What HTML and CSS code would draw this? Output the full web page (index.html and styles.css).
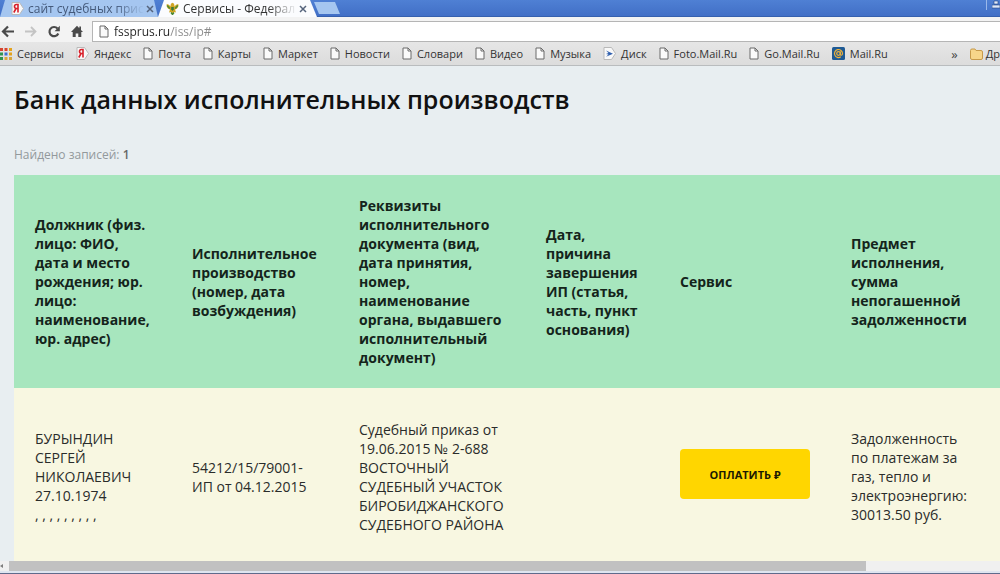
FILE: index.html
```html
<!DOCTYPE html>
<html lang="ru">
<head>
    <meta charset="UTF-8">
    <title>Сервисы - Федеральная служба</title>
    <meta name="viewport" content="width=device-width, initial-scale=1.0">
    <link rel="stylesheet" href="styles.css">
</head>
<body>
    <svg width="0" height="0" class="sprite" aria-hidden="true">
        <symbol id="page" viewBox="0 0 10 13">
            <path d="M1 1h5l3 3v8H1z" fill="#fafafa" stroke="#6b6b6b"/>
            <path d="M6 1v3h3" fill="none" stroke="#6b6b6b"/>
        </symbol>
        <symbol id="ya" viewBox="0 0 13 13">
            <path d="M1 .5h7.500l4 6-4 6H1z" fill="#f8f8f8" stroke="#b9b9b9"/>
            <path d="M7 10.500V2.500H5.500a2 2 0 0 0 0 4H7M5 6.500l-2.200 4" fill="none" stroke="#d8202a" stroke-width="1.600"/>
        </symbol>
    </svg>

    <header class="browser">
        <div class="tabs">
            <div class="tab">
                <svg class="tab-icon" width="13" height="13"><use href="#ya"/></svg>
                <span class="tab-title">сайт судебных прис</span>
                <button class="tab-close" aria-label="Закрыть">
                    <svg width="8" height="8" viewBox="0 0 8 8"><path d="M1 1l6 6M7 1L1 7"/></svg>
                </button>
            </div>
            <div class="tab active">
                <svg class="tab-icon" width="13" height="13" viewBox="0 0 13 13">
                    <path d="M.5 2.500C2 1.500 3.500 3 4.500 4.500 4.500 2.500 5 1 6.500.8 8 1 8.500 2.500 8.500 4.500 9.500 3 11 1.500 12.500 2.500 12.500 5.500 11 7 9 7.500L10 10.500 8 10 6.500 12.500 5 10 3 10.500 4 7.500C2 7 .5 5.500.5 2.500z" fill="#d0a524"/>
                    <path d="M1.200 3.500l2.600 3M11.800 3.500l-2.600 3M5 10.500l1.500 2 1.500-2" fill="none" stroke="#4c8a34" stroke-width="1.400"/>
                    <path d="M5.200 5h2.600v2.600L6.500 9 5.200 7.600z" fill="#3e7a36"/>
                </svg>
                <span class="tab-title">Сервисы - Федерал</span>
                <button class="tab-close" aria-label="Закрыть">
                    <svg width="8" height="8" viewBox="0 0 8 8"><path d="M1 1l6 6M7 1L1 7"/></svg>
                </button>
            </div>
            <button class="tab-new" aria-label="Новая вкладка"></button>
            <div class="user">
                <svg width="8" height="9" viewBox="0 0 8 9"><path d="M2 1h4v3H2zM0 5h8v3H0z" fill="#dfe9fa" stroke="#24447f" stroke-width=".6"/></svg>
            </div>
        </div>

        <div class="toolbar">
            <button class="nav" aria-label="Назад">
                <svg width="14" height="13" viewBox="0 0 14 13"><path d="M13 6.500H3M7 1.500l-5 5 5 5" fill="none" stroke="#4a4a4a" stroke-width="2.200"/></svg>
            </button>
            <button class="nav" aria-label="Вперёд">
                <svg width="14" height="13" viewBox="0 0 14 13"><path d="M1 6.500h10M7 2l4.500 4.500L7 11" fill="none" stroke="#c4c4c4" stroke-width="1.800"/></svg>
            </button>
            <button class="nav" aria-label="Обновить">
                <svg width="14" height="13" viewBox="0 0 14 13"><path d="M10.500 3.500A4.600 4.600 0 1 0 11.300 8.500" fill="none" stroke="#4a4a4a" stroke-width="2.200"/><path d="M12.800.8v5.400H7.600z" fill="#4a4a4a"/></svg>
            </button>
            <button class="nav" aria-label="Домой">
                <svg width="14" height="13" viewBox="0 0 14 13"><path d="M7 .8L1 7h1.700v5h3V8.500h2.600V12h3V7H13l-2-2V1.500H9.300v1.700z" fill="#4a4a4a"/></svg>
            </button>
            <div class="omnibox">
                <svg width="10" height="13"><use href="#page"/></svg>
                <input class="url" type="text" value="fssprus.ru/iss/ip#" aria-label="Адрес">
            </div>
        </div>

        <nav class="bookmarks">
            <a href="#" class="bookmark">
                <svg width="12" height="12" viewBox="0 0 12 12">
                    <path d="M0 0h3v3H0zM4.500 0h3v3h-3z" fill="#d8452f"/><path d="M9 0h3v3H9zM9 4.500h3v3H9z" fill="#e3a21c"/>
                    <path d="M0 4.500h3v3H0zM0 9h3v3H0z" fill="#2f9450"/><path d="M4.500 4.500h3v3h-3z" fill="#3c6fd0"/><path d="M4.500 9h3v3h-3zM9 9h3v3H9z" fill="#d9a53a"/>
                </svg>Сервисы</a>
            <a href="#" class="bookmark"><svg width="13" height="13"><use href="#ya"/></svg>Яндекс</a>
            <a href="#" class="bookmark"><svg width="10" height="13"><use href="#page"/></svg>Почта</a>
            <a href="#" class="bookmark"><svg width="10" height="13"><use href="#page"/></svg>Карты</a>
            <a href="#" class="bookmark"><svg width="10" height="13"><use href="#page"/></svg>Маркет</a>
            <a href="#" class="bookmark"><svg width="10" height="13"><use href="#page"/></svg>Новости</a>
            <a href="#" class="bookmark"><svg width="10" height="13"><use href="#page"/></svg>Словари</a>
            <a href="#" class="bookmark"><svg width="10" height="13"><use href="#page"/></svg>Видео</a>
            <a href="#" class="bookmark"><svg width="10" height="13"><use href="#page"/></svg>Музыка</a>
            <a href="#" class="bookmark">
                <svg width="13" height="13" viewBox="0 0 13 13"><path d="M1 .5h7.500l4 6-4 6H1z" fill="#f8f8f8" stroke="#b9b9b9"/><path d="M3 3.500l7 3.200-7 3 2.500-2.200L3 7l2.500-1z" fill="#2f5fae"/></svg>Диск</a>
            <a href="#" class="bookmark"><svg width="10" height="13"><use href="#page"/></svg>Foto.Mail.Ru</a>
            <a href="#" class="bookmark"><svg width="10" height="13"><use href="#page"/></svg>Go.Mail.Ru</a>
            <a href="#" class="bookmark">
                <svg width="13" height="13" viewBox="0 0 13 13"><rect width="13" height="13" rx="1.500" fill="#1f5a94"/><circle cx="6.500" cy="6.500" r="1.800" fill="none" stroke="#f0b23a" stroke-width="1.200"/><path d="M8.300 4.500v2.800c0 1.500 2.200 1.200 2.200-.8a4 4 0 1 0-1.700 3.300" fill="none" stroke="#f0b23a" stroke-width="1.200"/></svg>Mail.Ru</a>
            <button class="more" aria-label="Ещё закладки">»</button>
            <a href="#" class="bookmark">
                <svg width="13" height="12" viewBox="0 0 13 12"><path d="M.5 2.500q0-1.500 1.500-1.500h3l1 1.500h5q1.500 0 1.500 1.500v6q0 1.500-1.500 1.500H2Q.5 11.500.5 10z" fill="#f7d58a" stroke="#c79a4b"/></svg>Др</a>
        </nav>
    </header>

    <main class="page">
        <h1>Банк данных исполнительных производств</h1>
        <p class="found">Найдено записей: <b>1</b></p>

        <table class="results">
            <colgroup>
                <col class="col-debtor">
                <col class="col-case">
                <col class="col-doc">
                <col class="col-end">
                <col class="col-service">
                <col class="col-subject">
            </colgroup>
            <thead>
                <tr>
                    <th>Должник (физ. лицо: ФИО, дата&nbsp;и&nbsp;место рождения; юр. лицо: наименование, юр. адрес)</th>
                    <th>Исполнительное производство (номер, дата возбуждения)</th>
                    <th>Реквизиты исполнительного документа (вид, дата принятия, номер, наименование органа, выдавшего исполнительный документ)</th>
                    <th>Дата, причина завершения ИП (статья, часть, пункт основания)</th>
                    <th>Сервис</th>
                    <th>Предмет<br>исполнения,<br>сумма<br>непогашенной<br>задолженности</th>
                </tr>
            </thead>
            <tbody>
                <tr>
                    <td>БУРЫНДИН СЕРГЕЙ НИКОЛАЕВИЧ 27.10.1974<br>, , , , , , , , ,</td>
                    <td>54212/15/79001-<br>ИП от 04.12.2015</td>
                    <td>Судебный приказ от 19.06.2015 № 2-688 ВОСТОЧНЫЙ СУДЕБНЫЙ УЧАСТОК БИРОБИДЖАНСКОГО СУДЕБНОГО РАЙОНА</td>
                    <td></td>
                    <td><button class="pay">ОПЛАТИТЬ ₽</button></td>
                    <td>Задолженность<br>по платежам за<br>газ, тепло и<br>электроэнергию:<br>30013.50 руб.</td>
                </tr>
            </tbody>
        </table>
    </main>

    <div class="scrollbar">
        <svg width="9" height="10" viewBox="0 0 9 10"><path d="M3 3L0 5l3 2z" fill="#7d7d7d"/></svg>
        <div class="track"><div class="thumb"></div></div>
    </div>
</body>
</html>
```
FILE: styles.css
```css
* {
    box-sizing: border-box;
}

body {
    margin: 0;
    height: 100vh;
    display: flex;
    flex-direction: column;
    overflow: hidden;
    font-family: "Open Sans", "Noto Sans", sans-serif;
    font-size: 14px;
    line-height: 19px;
    color: #2a2c2a;
    background: #e8eef1;
    border-bottom: 1px solid #5f6b8c;
}

button {
    margin: 0;
    padding: 0;
    border: 0;
    background: none;
    font-family: inherit;
    cursor: pointer;
}

svg {
    display: block;
    flex: none;
}

.sprite {
    position: absolute;
}

/* browser */
.browser {
    flex: none;
    font-size: 11px;
    line-height: 16px;
    color: #333;
}

.tabs {
    display: flex;
    height: 17px;
    background: linear-gradient(#4f80d4, #416fc6);
    border-bottom: 1px solid #3560ae;
}

.tab {
    display: flex;
    align-items: center;
    width: 158px;
    height: 17px;
    padding: 0 6px 0 11px;
    background: #a5c6f0;
    color: #44597a;
    clip-path: polygon(5px 0, 154px 0, 100% 100%, 0 100%);
}

.tab.active {
    width: 162px;
    padding: 0 13px 0 8px;
    background: #fbfcfe;
    color: #333;
    clip-path: polygon(6px 0, 152px 0, 159px 100%, 0 100%);
}

.tab-icon {
    margin-right: 4px;
}

.tab-title {
    flex: 1;
    white-space: nowrap;
    font-size: 12px;
    -webkit-mask-image: linear-gradient(90deg, #000 75%, transparent);
    mask-image: linear-gradient(90deg, #000 75%, transparent);
}

.tab-close {
    margin-left: 2px;
}

.tab-close path {
    fill: none;
    stroke: #56647c;
    stroke-width: 1.5;
}

.tab-new {
    width: 26px;
    height: 12px;
    margin-top: 2px;
    margin-left: -6px;
    background: #a5c6f0;
    clip-path: polygon(0 0, 21px 0, 100% 100%, 5px 100%);
}

.user {
    margin-left: auto;
    padding: 0 0 0 5px;
    height: 10px;
    border-left: 1px solid #9ab8ea;
}

.toolbar {
    display: flex;
    align-items: center;
    height: 25px;
    padding-top: 3px;
    background: #f3f3f3;
}

.nav {
    margin-left: 1px;
    margin-right: 8px;
}

.omnibox {
    flex: 1;
    display: flex;
    align-items: center;
    height: 21px;
    padding-left: 6px;
    border: 1px solid #b5b5b5;
    border-right: 0;
    background: #fff;
}

.url {
    flex: 1;
    min-width: 0;
    height: 18px;
    margin-left: 5px;
    padding: 0;
    border: 0;
    outline: 0;
    font-family: inherit;
    font-size: 12px;
    color: #8a8a8a;
    /* host part is darker than the path */
    background: linear-gradient(90deg, #222 56px, #8a8a8a 56px);
    -webkit-background-clip: text;
    background-clip: text;
    -webkit-text-fill-color: transparent;
}

.bookmarks {
    display: flex;
    align-items: center;
    gap: 12px;
    height: 24px;
    background: linear-gradient(#e6e6e6, #dcdcdc);
    border-bottom: 1px solid #b9bcbe;
    white-space: nowrap;
}

.bookmark {
    display: flex;
    align-items: center;
    gap: 5px;
    color: inherit;
    text-decoration: none;
}

.bookmark:last-child {
    gap: 3px;
}

.more {
    margin-left: auto;
    font-size: 13px;
    color: #444;
}

/* page */
.page {
    flex: 1;
    min-height: 0;
    overflow: hidden;
    padding: 18px 0 0 14px;
}

h1 {
    margin: 0;
    font-size: 25px;
    line-height: 30px;
    font-weight: 600;
    color: #111;
    white-space: nowrap;
}

.found {
    margin: 32px 0 12px;
    font-size: 12px;
    line-height: 17px;
    color: #93999c;
}

.found b {
    font-weight: 600;
    color: #666;
}

.results {
    width: 100%;
    table-layout: fixed;
    border-collapse: collapse;
}

.col-debtor { width: 157px; }
.col-case { width: 167px; }
.col-doc { width: 187px; }
.col-end { width: 134px; }
.col-service { width: 171px; }

th,
td {
    padding: 21px 0 21px 21px;
    text-align: left;
    vertical-align: middle;
}

th {
    padding-right: 18px;
    font-weight: 700;
    color: #14241b;
    background: #a7e6be;
}

td {
    height: 177px;
    padding-right: 18px;
    background: #f8f7e1;
}

.pay {
    display: block;
    width: 130px;
    height: 50px;
    margin-bottom: 5px;
    border-radius: 4px;
    background: #ffd600;
    color: #1c1a00;
    font-size: 11px;
    font-weight: 700;
}

.scrollbar {
    flex: none;
    display: flex;
    height: 12px;
    background: #f0f0f0;
    border-bottom: 2px solid #dfe5f0;
}

.track {
    flex: 1;
}

.thumb {
    width: 86.5%;
    height: 10px;
    background: #c1c1c1;
}
```
